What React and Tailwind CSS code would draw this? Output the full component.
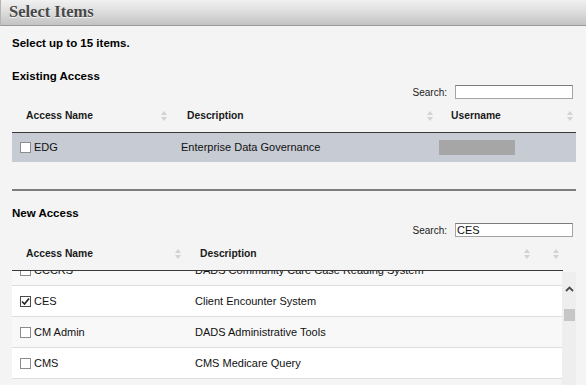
import React from 'react';

const EXISTING = [{ name: 'EDG', desc: 'Enterprise Data Governance' }];

const NEW_ROWS = [
  { name: 'CCCRS', desc: 'DADS Community Care Case Reading System' },
  { name: 'CES', desc: 'Client Encounter System', checked: true },
  { name: 'CM Admin', desc: 'DADS Administrative Tools' },
  { name: 'CMS', desc: 'CMS Medicare Query' },
];

function SortIcon() {
  return (
    <svg width="6" height="10" viewBox="0 0 6 10" className="shrink-0">
      <path d="M3 0L6 4H0Z" fill="#d2d2d2" />
      <path d="M0 6H6L3 10Z" fill="#d2d2d2" />
    </svg>
  );
}

function Checkbox({ checked }) {
  return (
    <span
      className={`w-[11px] h-[11px] border bg-white flex items-center justify-center shrink-0 ${
        checked ? 'border-[#4a4a4a]' : 'border-[#8c8c8c]'
      }`}
    >
      {checked && (
        <svg width="9" height="9" viewBox="0 0 9 9">
          <path d="M1 4.5L3.5 7L8 1.5" fill="none" stroke="#222" strokeWidth="1.6" />
        </svg>
      )}
    </span>
  );
}

function SearchBox({ value }) {
  return (
    <div className="h-[14px] flex items-center justify-end gap-[8px] pr-[3px]">
      <span className="text-[10px] text-[#222]">Search:</span>
      <div className="w-[118px] h-[14px] bg-white border border-[#a3a3a3] border-t-[#7c7c7c] flex items-center pl-[1px] text-[11px] text-[#111] leading-none">
        {value}
      </div>
    </div>
  );
}

export default function App() {
  return (
    <div className="w-[586px] h-[385px] bg-[#f4f4f4] overflow-hidden font-['Liberation_Sans',Arial,sans-serif] text-black">
      {/* Title bar */}
      <div className="h-[26px] bg-gradient-to-b from-[#f1f1f1] via-[#dcdcdc] to-[#c3c3c3] border-b border-[#9a9a9a] border-l border-l-[#b4b4b4] flex items-center pl-[8px]">
        <span className="font-['Liberation_Serif','Times_New_Roman',serif] font-bold text-[16.5px] text-[#484848] [text-shadow:0_1px_0_#f4f4f4]">
          Select Items
        </span>
      </div>

      <div className="pl-[12px] pr-[10px]">
        <div className="h-[36px] flex items-center text-[11.5px] font-bold">Select up to 15 items.</div>

        {/* Existing Access */}
        <div className="h-[30px] flex items-center text-[11.5px] font-bold">Existing Access</div>
        <div className="-mt-[7px]">
          <SearchBox value="" />
        </div>
        <div className="h-[34px] flex border-b border-[#3a3a3a] text-[10.3px] font-bold text-[#1a1a1a]">
          <div className="w-[160px] flex items-center justify-between pl-[14px] pr-[5px]">
            <span>Access Name</span>
            <SortIcon />
          </div>
          <div className="w-[266px] flex items-center justify-between pl-[15px] pr-[5px]">
            <span>Description</span>
            <SortIcon />
          </div>
          <div className="flex-1 flex items-center justify-between pl-[13px] pr-[3px]">
            <span>Username</span>
            <SortIcon />
          </div>
        </div>
        {EXISTING.map(r => (
          <div key={r.name} className="h-[29px] flex bg-[#c7cbd3] text-[11px] text-[#111]">
            <div className="w-[160px] flex items-center gap-[3px] pl-[8px]">
              <Checkbox />
              <span>{r.name}</span>
            </div>
            <div className="w-[266px] flex items-center pl-[9px]">{r.desc}</div>
            <div className="flex-1 flex items-center pl-[1px]">
              <div className="w-[76px] h-[15px] bg-[#a6a6a6]" />
            </div>
          </div>
        ))}
        <div className="h-[27px]" />
        <div className="h-[2px] bg-[#7d7d7d]" />

        {/* New Access */}
        <div className="h-[46px] flex items-center text-[11.5px] font-bold">New Access</div>
        <div className="-mt-[14px]">
          <SearchBox value="CES" />
        </div>
        <div className="w-[551px] h-[34px] flex border-b border-[#3a3a3a] text-[10.3px] font-bold text-[#1a1a1a]">
          <div className="w-[173px] flex items-center justify-between pl-[14px] pr-[4px]">
            <span>Access Name</span>
            <SortIcon />
          </div>
          <div className="w-[349px] flex items-center justify-between pl-[15px] pr-[4px]">
            <span>Description</span>
            <SortIcon />
          </div>
          <div className="flex-1 flex items-center justify-end pr-[4px]">
            <SortIcon />
          </div>
        </div>
        <div className="flex">
          <div className="w-[551px] h-[114px] overflow-hidden">
            <div className="-mt-[16px]">
              {NEW_ROWS.map((r, i) => (
                <div
                  key={r.name}
                  className={`h-[31px] flex border-b border-[#dedede] text-[11px] text-[#111] ${
                    i % 2 === 0 ? 'bg-[#f8f8f8]' : 'bg-white'
                  }`}
                >
                  <div className="w-[173px] flex items-center gap-[3px] pl-[8px]">
                    <Checkbox checked={r.checked} />
                    <span>{r.name}</span>
                  </div>
                  <div className="flex-1 flex items-center pl-[10px]">{r.desc}</div>
                </div>
              ))}
            </div>
          </div>
          {/* Scrollbar */}
          <div className="w-[14px] h-[113px] mt-[1px] bg-[#eeeeee] flex flex-col items-center">
            <svg width="9" height="6" viewBox="0 0 9 6" className="mt-[14px]">
              <path d="M1 5L4.5 1.5L8 5" fill="none" stroke="#4a4a4a" strokeWidth="1.8" />
            </svg>
            <div className="w-[11px] h-[12px] bg-[#c6c6c6] mt-[17px]" />
          </div>
        </div>
      </div>
    </div>
  );
}
